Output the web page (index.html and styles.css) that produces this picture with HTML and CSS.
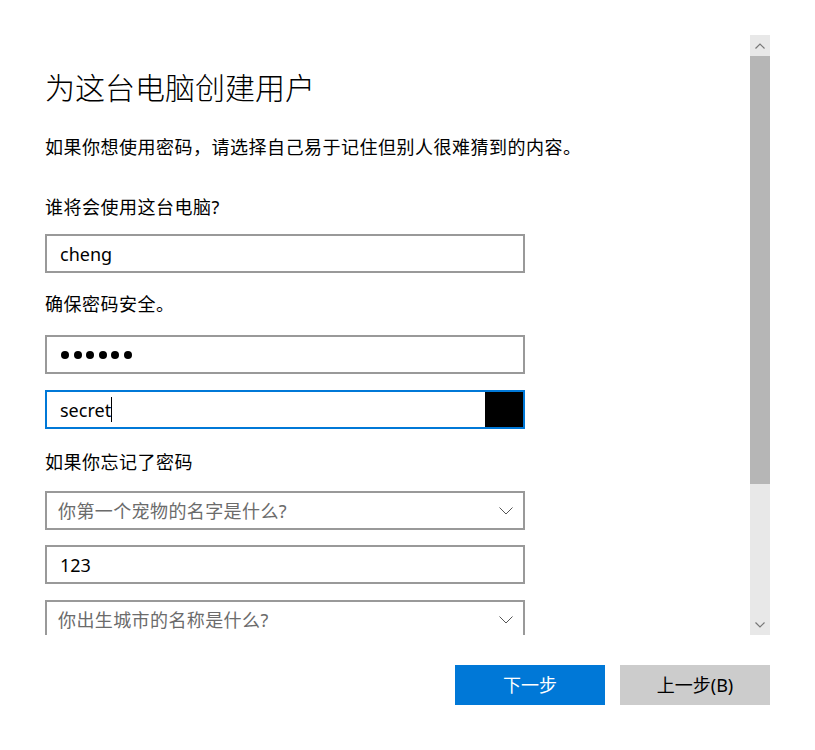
FILE: index.html
```html
<!DOCTYPE html>
<html lang="zh-CN">
<head>
<meta charset="utf-8">
<title>为这台电脑创建用户</title>
<link rel="stylesheet" href="styles.css">
</head>
<body>
<div class="window">
  <div class="scroll-area">
    <div class="content">
      <h1 class="title">为这台电脑创建用户</h1>
      <p class="intro">如果你想使用密码，请选择自己易于记住但别人很难猜到的内容。</p>
      <div class="label label-who">谁将会使用这台电脑?</div>
      <div class="field field-user"><span class="value">cheng</span></div>
      <div class="label label-safe">确保密码安全。</div>
      <div class="field field-pwd">
        <span class="dots"><i></i><i></i><i></i><i></i><i></i><i></i></span>
      </div>
      <div class="field field-focus">
        <span class="value">secret</span><span class="caret"></span>
        <span class="reveal"></span>
      </div>
      <div class="label label-forgot">如果你忘记了密码</div>
      <div class="field select select-1">
        <span class="placeholder">你第一个宠物的名字是什么?</span>
        <svg class="chev" width="14" height="8" viewBox="0 0 14 8"><path d="M0.5 0.5 L7 7 L13.5 0.5" fill="none" stroke="#555" stroke-width="1"/></svg>
      </div>
      <div class="field field-answer"><span class="value">123</span></div>
      <div class="field select select-2">
        <span class="placeholder">你出生城市的名称是什么?</span>
        <svg class="chev" width="14" height="8" viewBox="0 0 14 8"><path d="M0.5 0.5 L7 7 L13.5 0.5" fill="none" stroke="#555" stroke-width="1"/></svg>
      </div>
    </div>
    <div class="scrollbar">
      <div class="sb-btn">
        <svg width="10" height="6" viewBox="0 0 10 6"><path d="M0.5 5.5 L5 1 L9.5 5.5" fill="none" stroke="#777" stroke-width="1.2"/></svg>
      </div>
      <div class="sb-thumb"></div>
      <div class="sb-track"></div>
      <div class="sb-btn">
        <svg width="10" height="6" viewBox="0 0 10 6"><path d="M0.5 0.5 L5 5 L9.5 0.5" fill="none" stroke="#777" stroke-width="1.2"/></svg>
      </div>
    </div>
  </div>
  <div class="footer">
    <button class="btn btn-primary">下一步</button>
    <button class="btn btn-secondary">上一步(B)</button>
  </div>
</div>
</body>
</html>
```
FILE: styles.css
```css
html, body {
  margin: 0;
  padding: 0;
  background: #ffffff;
}

body {
  font-family: "Noto Sans", "Noto Sans CJK SC", sans-serif;
  color: #000;
  width: 815px;
  height: 750px;
  overflow: hidden;
}

.window {
  padding-top: 35px;
  display: flex;
  flex-direction: column;
}

.scroll-area {
  display: flex;
  height: 600px;
  width: 770px;
}

.content {
  flex: 1;
  overflow: hidden;
  padding-left: 45px;
  display: flex;
  flex-direction: column;
  align-items: flex-start;
}

.title {
  margin: 31px 0 0 0;
  font-family: "Noto Sans CJK SC", sans-serif;
  font-weight: 300;
  font-size: 30px;
  line-height: 40px;
}

.intro {
  margin: 29px 0 0 0;
  font-size: 18px;
  line-height: 24px;
  letter-spacing: 0.5px;
}

.label {
  font-size: 18px;
  line-height: 24px;
  letter-spacing: 0.5px;
}

.label-who { margin-top: 36px; }
.label-safe { margin-top: 19px; }
.label-forgot { margin-top: 21px; }

.field {
  box-sizing: border-box;
  width: 480px;
  height: 39px;
  flex: none;
  border: 2px solid #999999;
  background: #fff;
  display: flex;
  align-items: center;
  padding-left: 13px;
  font-size: 18px;
}

.field-user { margin-top: 15px; }
.field-pwd { margin-top: 19px; }
.field-focus { margin-top: 16px; border-color: #0078d7; padding-right: 0; }
.select-1 { margin-top: 17px; }
.field-answer { margin-top: 15px; }
.select-2 { margin-top: 16px; }

.value {
  line-height: 24px;
}

.dots {
  display: flex;
  gap: 4.5px;
  padding-left: 1px;
}

.dots i {
  width: 8px;
  height: 8px;
  border-radius: 50%;
  background: #000;
}

.caret {
  width: 1px;
  height: 25px;
  background: #000;
}

.reveal {
  margin-left: auto;
  width: 38px;
  height: 100%;
  background: #000;
}

.select {
  padding-left: 11px;
  padding-right: 10px;
  justify-content: space-between;
}

.placeholder {
  color: #6b6b6b;
  line-height: 24px;
  letter-spacing: 0.4px;
}

.chev {
  display: block;
}

.scrollbar {
  width: 20px;
  display: flex;
  flex-direction: column;
  background: #e8e8e8;
}

.sb-btn {
  height: 21px;
  display: flex;
  align-items: center;
  justify-content: center;
  flex: none;
}

.sb-thumb {
  height: 428px;
  background: #b6b6b6;
  flex: none;
}

.sb-track {
  flex: 1;
}

.footer {
  display: flex;
  justify-content: flex-end;
  gap: 15px;
  width: 770px;
  margin-top: 30px;
}

.btn {
  width: 150px;
  height: 40px;
  border: none;
  font-family: "Noto Sans", "Noto Sans CJK SC", sans-serif;
  font-size: 18px;
  padding: 0;
  line-height: 24px;
}

.btn-primary {
  background: #0078d7;
  color: #fff;
}

.btn-secondary {
  background: #cccccc;
  color: #000;
}
```
